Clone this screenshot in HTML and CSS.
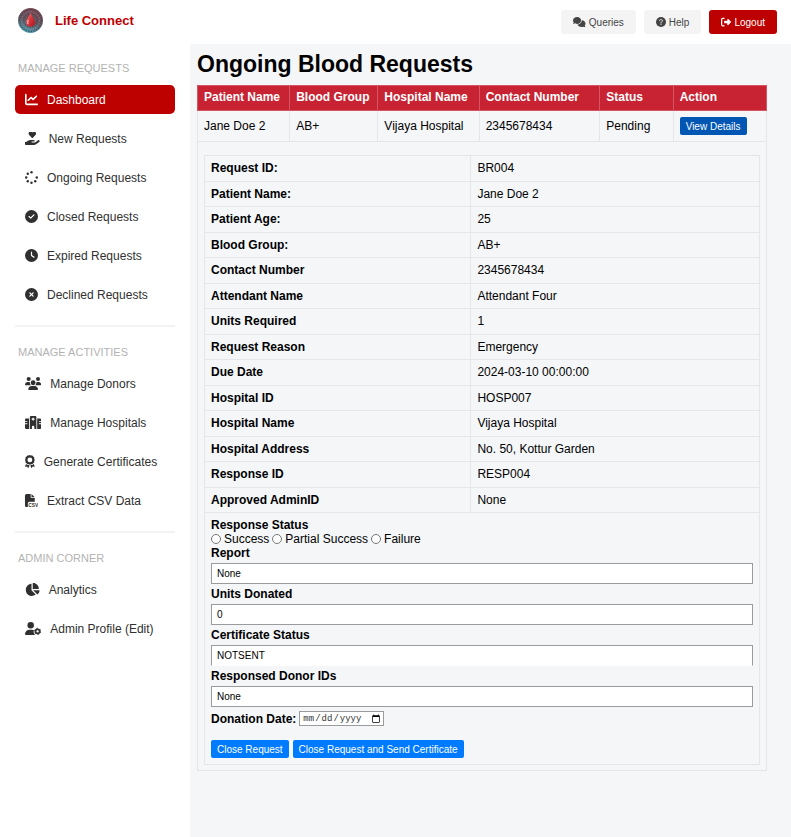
FILE: index.html
```html
<!DOCTYPE html>
<html lang="en">
<head>
<meta charset="utf-8">
<title>Life Connect</title>
<link rel="stylesheet" href="styles.css">
</head>
<body>
<header class="topbar">
  <a class="brand" href="#">
    <svg class="logo" viewBox="0 0 48 48" aria-hidden="true">
      <defs>
        <linearGradient id="disc" x1="0.6" y1="0" x2="0.3" y2="1">
          <stop offset="0" stop-color="#7b4550"/>
          <stop offset="0.5" stop-color="#645560"/>
          <stop offset="1" stop-color="#4ba3b4"/>
        </linearGradient>
        <linearGradient id="drop" x1="0" y1="0" x2="1" y2="1">
          <stop offset="0" stop-color="#ff8b78"/>
          <stop offset="0.5" stop-color="#d8333a"/>
          <stop offset="1" stop-color="#a81420"/>
        </linearGradient>
      </defs>
      <circle cx="24" cy="24" r="24" fill="url(#disc)"/>
      <g fill="none" stroke-dasharray="2 3">
        <circle cx="24" cy="24" r="21" stroke="#34424f" stroke-width="2"/>
        <circle cx="24" cy="24" r="17" stroke="#a98791" stroke-width="1.5"/>
        <circle cx="24" cy="24" r="13" stroke="#3f4652" stroke-width="2"/>
      </g>
      <path d="M24 9C21 18 15 22 15 28a9 8 0 0 0 18 0c0-6-6-10-9-19z" fill="url(#drop)"/>
      <path d="M20 23c-2 3-2 6 0 8" fill="none" stroke="#ffc3b5" stroke-width="2"/>
    </svg>
    <span>Life Connect</span>
  </a>
  <nav class="actions">
    <button class="tool" type="button">
      <svg class="icon" viewBox="0 0 640 512" aria-hidden="true"><path d="M208 352c115 0 208-79 208-176S323 0 208 0 0 79 0 176c0 38 14 74 39 103-4 20-17 39-30 54-7 7-9 17-5 19 54 0 94-19 118-30 26 19 56 30 86 30z"/><path d="M448 176c0 112-99 199-221 207 25 75 110 129 205 129 31 0 60-6 86-17 24 11 64 17 117 17 5-3 3-13-4-19-13-15-26-34-30-54 25-29 39-65 39-103 0-90-82-165-192-175v15z"/></svg>
      <span>Queries</span>
    </button>
    <button class="tool" type="button">
      <svg class="icon" viewBox="0 0 512 512" aria-hidden="true"><circle cx="256" cy="256" r="256"/><path d="M178 186c8-32 28-50 60-50h34c76 0 80 92 20 112-28 12-36 20-36 52" fill="none" stroke="#f4f4f4" stroke-width="48" stroke-linecap="round"/><circle cx="256" cy="368" r="32" fill="#f4f4f4"/></svg>
      <span>Help</span>
    </button>
    <button class="tool tool-danger" type="button">
      <svg class="icon" viewBox="0 0 512 512" aria-hidden="true"><path d="M377.900 105.900L500.700 228.700c7.200 7.200 11.300 17.100 11.300 27.300s-4.100 20.100-11.300 27.300L377.900 406.100c-6.400 6.400-15 9.900-24 9.900-18.700 0-33.900-15.200-33.900-33.900V320H192c-17.700 0-32-14.300-32-32v-64c0-17.700 14.300-32 32-32h128v-62.100c0-18.700 15.200-33.900 33.900-33.900 9 0 17.600 3.600 24 9.900zM160 96H96c-17.700 0-32 14.300-32 32v256c0 17.700 14.300 32 32 32h64c17.700 0 32 14.300 32 32s-14.300 32-32 32H96c-53 0-96-43-96-96V128C0 75 43 32 96 32h64c17.700 0 32 14.300 32 32s-14.300 32-32 32z"/></svg>
      <span>Logout</span>
    </button>
  </nav>
</header>
<div class="layout">
  <nav class="sidebar">
    <section class="group">
      <h2 class="group-title">MANAGE REQUESTS</h2>
      <a class="item item-active" href="#">
        <svg class="icon" viewBox="0 0 512 512" aria-hidden="true"><path d="M64 64c0-17.700-14.300-32-32-32S0 46.300 0 64V400c0 44.200 35.800 80 80 80H480c17.700 0 32-14.300 32-32s-14.300-32-32-32H80c-8.800 0-16-7.200-16-16V64zm406.600 86.600c12.500-12.500 12.500-32.800 0-45.300s-32.800-12.500-45.300 0L320 210.700l-57.400-57.400c-12.500-12.500-32.800-12.500-45.300 0l-112 112c-12.500 12.500-12.500 32.800 0 45.300s32.800 12.500 45.300 0L240 221.300l57.400 57.400c12.500 12.500 32.800 12.500 45.300 0l128-128z"/></svg>
        Dashboard</a>
      <a class="item" href="#">
        <svg class="icon" viewBox="0 0 576 512" aria-hidden="true"><path d="M275 233 163 117c-33-33-31-88 6-118 31-24 78-20 107 10l12 12 12-12c29-30 76-34 107-10 37 30 39 85 6 118L301 233c-7 7-19 7-26 0zM568 336c13 18 9 43-9 56L433 485c-23 17-52 27-81 27H32c-18 0-32-14-32-32v-64c0-18 14-32 32-32h37l45-36c28-23 64-35 100-35h138c18 0 32 14 32 32s-14 32-32 32h-80c-9 0-16 7-16 16s7 16 16 16h121l120-88c18-13 43-9 55 15z"/></svg>
        New Requests</a>
      <a class="item" href="#">
        <svg class="icon" viewBox="0 0 512 512" aria-hidden="true"><circle cx="256" cy="48" r="48"/><circle cx="256" cy="464" r="48"/><circle cx="48" cy="256" r="48"/><circle cx="464" cy="256" r="48"/><circle cx="109" cy="109" r="48"/><circle cx="109" cy="403" r="48"/><circle cx="403" cy="403" r="48"/></svg>
        Ongoing Requests</a>
      <a class="item" href="#">
        <svg class="icon" viewBox="0 0 512 512" aria-hidden="true"><path d="M256 512A256 256 0 1 0 256 0a256 256 0 1 0 0 512zM369 209L241 337c-9.400 9.400-24.600 9.400-33.900 0l-64-64c-9.400-9.400-9.400-24.600 0-33.900s24.600-9.400 33.900 0l47 47L335 175c9.400-9.400 24.600-9.400 33.900 0s9.400 24.600 0 33.900z"/></svg>
        Closed Requests</a>
      <a class="item" href="#">
        <svg class="icon" viewBox="0 0 512 512" aria-hidden="true"><path d="M256 0a256 256 0 1 1 0 512A256 256 0 1 1 256 0zM232 120V256c0 8 4 15.500 10.700 20l96 64c11 7.400 25.900 4.400 33.300-6.700s4.400-25.900-6.700-33.300L280 243.200V120c0-13.300-10.700-24-24-24s-24 10.700-24 24z"/></svg>
        Expired Requests</a>
      <a class="item" href="#">
        <svg class="icon" viewBox="0 0 512 512" aria-hidden="true"><path d="M256 512A256 256 0 1 0 256 0a256 256 0 1 0 0 512zM175 175c9.400-9.400 24.600-9.400 33.900 0l47 47 47-47c9.400-9.400 24.600-9.400 33.900 0s9.400 24.600 0 33.900l-47 47 47 47c9.400 9.400 9.400 24.600 0 33.900s-24.600 9.400-33.900 0l-47-47-47 47c-9.400 9.400-24.600 9.400-33.900 0s-9.400-24.600 0-33.900l47-47-47-47c-9.400-9.400-9.400-24.600 0-33.900z"/></svg>
        Declined Requests</a>
    </section>
    <section class="group">
      <h2 class="group-title">MANAGE ACTIVITIES</h2>
      <a class="item" href="#">
        <svg class="icon" viewBox="0 0 640 512" aria-hidden="true"><circle cx="144" cy="80" r="80"/><circle cx="512" cy="80" r="80"/><circle cx="320" cy="224" r="96"/><path d="M0 299c0-59 48-107 107-107h42c16 0 31 4 45 10-10 46 5 89 41 118H21c-12 0-21-9-21-21zM405 320c36-29 51-72 41-118 14-6 29-10 45-10h42c59 0 107 48 107 107 0 12-9 21-21 21zM128 485c0-73 60-133 133-133h118c73 0 133 60 133 133 0 15-12 27-27 27H155c-15 0-27-12-27-27z"/></svg>
        Manage Donors</a>
      <a class="item" href="#">
        <svg class="icon" viewBox="0 0 640 512" aria-hidden="true"><path fill-rule="evenodd" d="M192 48c0-27 21-48 48-48h160c27 0 48 21 48 48v464h-80v-80c0-27-21-48-48-48s-48 21-48 48v80h-80zM296 64v32h-32v48h32v32h48v-32h32V96h-32V64zM48 96h112v416H48c-27 0-48-21-48-48V320h80c9 0 16-7 16-16s-7-16-16-16H0v-64h80c9 0 16-7 16-16s-7-16-16-16H0v-48c0-27 21-48 48-48zM480 96h112c27 0 48 21 48 48v48h-80c-9 0-16 7-16 16s7 16 16 16h80v64h-80c-9 0-16 7-16 16s7 16 16 16h80v144c0 27-21 48-48 48H480z"/></svg>
        Manage Hospitals</a>
      <a class="item" href="#">
        <svg class="icon" viewBox="0 0 384 512" aria-hidden="true"><path fill-rule="evenodd" d="M192 0l48 19 51 0 29 43 43 30 0 52 21 48-21 48 0 51-43 30-29 43-51 0-48 20-48-20-51 0-29-43-43-30 0-51L0 192l21-48 0-52 43-30 29-43 51 0zM192 288a96 96 0 1 0 0-192 96 96 0 1 0 0 192z"/><path d="M5 444l41-99 35 49 61 1 36 16-40 92c-5 11-20 12-26 2l-29-49-57 8c-15 2-27-8-21-20zM379 444l-41-99-35 49-61 1-36 16 40 92c5 11 20 12 26 2l29-49 57 8c15 2 27-8 21-20z"/></svg>
        Generate Certificates</a>
      <a class="item" href="#">
        <svg class="icon" viewBox="0 0 512 512" aria-hidden="true"><path d="M0 64C0 29 29 0 64 0h160v128c0 18 14 32 32 32h128v144H176c-35 0-64 29-64 64v144H64c-35 0-64-29-64-64zM384 128H256V0z"/><text class="csv" x="130" y="505">CSV</text></svg>
        Extract CSV Data</a>
    </section>
    <section class="group">
      <h2 class="group-title">ADMIN CORNER</h2>
      <a class="item" href="#">
        <svg class="icon" viewBox="0 0 576 512" aria-hidden="true"><path d="M304 240V16.600c0-9 7-16.600 16-16.600C443.700 0 544 100.300 544 224c0 9-7.600 16-16.600 16H304zM32 272C32 150.700 122.100 50.300 239 34.300c9.200-1.300 17 6.100 17 15.400V288L412.500 444.500c6.700 6.700 6.200 17.700-1.500 23.100C371.800 495.600 323.800 512 272 512C139.500 512 32 404.600 32 272zm526.400 16c9.300 0 16.600 7.800 15.400 17c-7.700 55.900-34.600 105.600-73.900 142.300c-6 5.600-15.400 5.200-21.200-.7L320 288H558.400z"/></svg>
        Analytics</a>
      <a class="item" href="#">
        <svg class="icon" viewBox="0 0 640 512" aria-hidden="true"><circle cx="224" cy="128" r="128"/><path d="M178 304h92c30 0 58 7 83 20-22 60-10 130 40 180l8 8H30c-17 0-30-13-30-30 0-98 80-178 178-178z"/><circle cx="496" cy="368" r="82" fill="none" stroke="currentColor" stroke-width="68"/><circle cx="496" cy="368" r="122" fill="none" stroke="currentColor" stroke-width="38" stroke-dasharray="64 64"/></svg>
        Admin Profile (Edit)</a>
    </section>
  </nav>
  <main class="content">
    <h1 class="page-title">Ongoing Blood Requests</h1>
    <table class="requests">
      <colgroup><col class="c-name"><col class="c-group"><col class="c-hospital"><col class="c-contact"><col class="c-status"><col></colgroup>
      <thead>
        <tr><th>Patient Name</th><th>Blood Group</th><th>Hospital Name</th><th>Contact Number</th><th>Status</th><th>Action</th></tr>
      </thead>
      <tbody>
        <tr class="request"><td>Jane Doe 2</td><td>AB+</td><td>Vijaya Hospital</td><td>2345678434</td><td>Pending</td><td><button class="btn btn-dark" type="button">View Details</button></td></tr>
        <tr>
          <td class="details-cell" colspan="6">
            <table class="details">
              <colgroup><col class="c-key"><col></colgroup>
              <tbody>
                <tr><th scope="row">Request ID:</th><td>BR004</td></tr>
                <tr><th scope="row">Patient Name:</th><td>Jane Doe 2</td></tr>
                <tr><th scope="row">Patient Age:</th><td>25</td></tr>
                <tr><th scope="row">Blood Group:</th><td>AB+</td></tr>
                <tr><th scope="row">Contact Number</th><td>2345678434</td></tr>
                <tr><th scope="row">Attendant Name</th><td>Attendant Four</td></tr>
                <tr><th scope="row">Units Required</th><td>1</td></tr>
                <tr><th scope="row">Request Reason</th><td>Emergency</td></tr>
                <tr><th scope="row">Due Date</th><td>2024-03-10 00:00:00</td></tr>
                <tr><th scope="row">Hospital ID</th><td>HOSP007</td></tr>
                <tr><th scope="row">Hospital Name</th><td>Vijaya Hospital</td></tr>
                <tr><th scope="row">Hospital Address</th><td>No. 50, Kottur Garden</td></tr>
                <tr><th scope="row">Response ID</th><td>RESP004</td></tr>
                <tr><th scope="row">Approved AdminID</th><td>None</td></tr>
                <tr>
                  <td class="form-cell" colspan="2">
                    <form class="response">
                      <fieldset class="status">
                        <legend>Response Status</legend>
                        <input type="radio" id="s1" name="status"><label for="s1">Success</label>
                        <input type="radio" id="s2" name="status"><label for="s2">Partial Success</label>
                        <input type="radio" id="s3" name="status"><label for="s3">Failure</label>
                      </fieldset>
                      <label class="name" for="report">Report</label>
                      <input class="field" id="report" type="text" value="None">
                      <label class="name" for="units">Units Donated</label>
                      <input class="field" id="units" type="text" value="0">
                      <label class="name" for="cert">Certificate Status</label>
                      <input class="field field-open" id="cert" type="text" value="NOTSENT">
                      <label class="name" for="donors">Responsed Donor IDs</label>
                      <input class="field" id="donors" type="text" value="None">
                      <div class="date-row">
                        <label class="name" for="date">Donation Date:</label>
                        <input class="date" id="date" type="date">
                      </div>
                      <div class="buttons">
                        <button class="btn" type="button">Close Request</button>
                        <button class="btn" type="button">Close Request and Send Certificate</button>
                      </div>
                    </form>
                  </td>
                </tr>
              </tbody>
            </table>
          </td>
        </tr>
      </tbody>
    </table>
  </main>
</div>
</body>
</html>
```
FILE: styles.css
```css
* { box-sizing: border-box; }

body {
  margin: 0;
  min-height: 100vh;
  display: flex;
  flex-direction: column;
  background: #fff;
  color: #000;
  font-family: "Liberation Sans", Arial, sans-serif;
  font-size: 12px;
  line-height: 14px;
}

button, input { font-family: inherit; }
a { color: inherit; text-decoration: none; }
.icon { display: block; flex: none; height: 13px; fill: currentColor; }
.csv { font: bold 190px "Liberation Sans", Arial, sans-serif; }

/* Top bar */
.topbar {
  display: flex;
  align-items: center;
  justify-content: space-between;
  height: 44px;
  padding: 0 14px 0 18px;
}
.brand {
  display: flex;
  align-items: center;
  gap: 12px;
  padding-bottom: 3px;
  color: #bd0000;
  font-size: 13px;
  font-weight: bold;
}
.logo { width: 25px; height: 25px; }
.actions { display: flex; gap: 8px; }
.tool {
  display: flex;
  align-items: center;
  gap: 3px;
  height: 24px;
  padding: 0 12px;
  border: 0;
  border-radius: 3px;
  background: #f4f4f4;
  color: #444;
  font-size: 10px;
}
.tool .icon { height: 10px; }
.tool-danger { background: #bd0000; color: #fff; }

/* Sidebar */
.layout { display: flex; flex: 1; }
.sidebar { flex: none; width: 190px; padding: 17px 15px; }
.group {
  display: flex;
  flex-direction: column;
  gap: 10px;
}
.group + .group {
  margin-top: 16px;
  padding-top: 18px;
  border-top: 2px solid #f3f3f3;
}
.group-title {
  margin: 0;
  padding-left: 3px;
  color: #b3b3b3;
  font-size: 11px;
  font-weight: normal;
}
.item {
  display: flex;
  align-items: center;
  gap: 9px;
  height: 29px;
  padding-left: 10px;
  border-radius: 5px;
  color: #303030;
}
.item-active { background: #bd0000; color: #fff; }

/* Content */
.content { flex: 1; min-width: 0; padding: 6px 24px 24px 7px; background: #f4f6f8; }
.page-title { margin: 0 0 7px; font-size: 23px; line-height: 28px; }
table { width: 100%; border-collapse: collapse; table-layout: fixed; }
th, td { border: 1px solid #e4e6e8; padding: 5px 6px 6px; text-align: left; }
.c-name { width: 16.2%; }
.c-group { width: 15.5%; }
.c-hospital { width: 17.8%; }
.c-contact { width: 21.2%; }
.c-status { width: 12.9%; }
.c-key { width: 48%; }
.requests thead th { padding: 4px 6px 6px; background: #c82333; border-color: #d65562; color: #fff; }
.request td { padding: 6px; }
.requests .details-cell { padding: 13px 6px 5px; }
.details tr:nth-child(even) > * { padding-bottom: 5px; }
.requests .form-cell { padding: 5px 6px 6px; }

.btn {
  height: 18px;
  padding: 0 6px;
  border: 0;
  border-radius: 2px;
  background: #007bff;
  color: #fff;
  font-size: 10px;
}
.btn-dark { display: block; background: #0056b3; }

/* Response form */
.response { display: flex; flex-direction: column; gap: 3px; }
.status {
  display: flex;
  align-items: center;
  margin: 0 0 -3px;
  padding: 0;
  border: 0;
}
.status legend { padding: 0; font-weight: bold; }
.status input { width: 10px; height: 10px; margin: 0 3px 0 0; }
.status label { margin-right: 3px; }
.name { font-weight: bold; }
.field {
  width: 100%;
  height: 21px;
  padding: 0 5px;
  border: 1px solid #999b9d;
  background: #fff;
  font-size: 10px;
}
.field-open { border-bottom-color: #fff; }
.date-row { display: flex; align-items: center; gap: 3px; margin-top: 1px; }
.date {
  width: 85px;
  height: 15px;
  padding: 0 2px;
  border: 1px solid #999b9d;
  background: #fff;
  color: #333;
  font-family: "Liberation Mono", monospace;
  font-size: 9px;
}
.date::-webkit-calendar-picker-indicator { width: 10px; height: 10px; padding: 0; margin-left: 0; }
.buttons { display: flex; gap: 4px; margin-top: 11px; }
```
